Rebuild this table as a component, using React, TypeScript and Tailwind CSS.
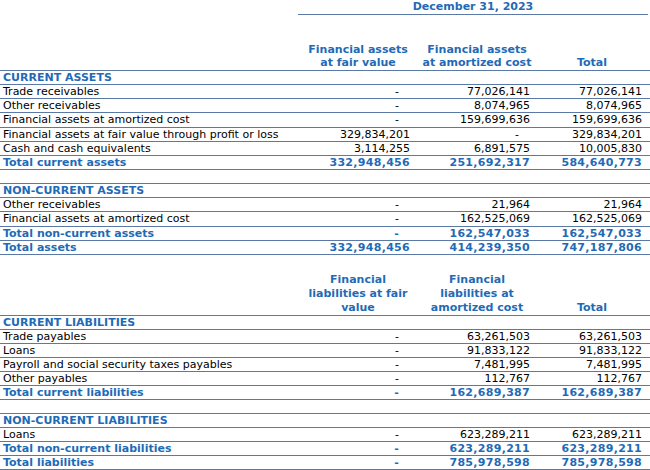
import React from "react";

type Kind = "head" | "item" | "total" | "blank";
type Row = { label?: string; v?: [string, string, string]; kind: Kind };

const assets: Row[] = [
  { label: "CURRENT ASSETS", kind: "head" },
  { label: "Trade receivables", v: ["-", "77,026,141", "77,026,141"], kind: "item" },
  { label: "Other receivables", v: ["-", "8,074,965", "8,074,965"], kind: "item" },
  { label: "Financial assets at amortized cost", v: ["-", "159,699,636", "159,699,636"], kind: "item" },
  { label: "Financial assets at fair value through profit or loss", v: ["329,834,201", "-", "329,834,201"], kind: "item" },
  { label: "Cash and cash equivalents", v: ["3,114,255", "6,891,575", "10,005,830"], kind: "item" },
  { label: "Total current assets", v: ["332,948,456", "251,692,317", "584,640,773"], kind: "total" },
  { kind: "blank" },
  { label: "NON-CURRENT ASSETS", kind: "head" },
  { label: "Other receivables", v: ["-", "21,964", "21,964"], kind: "item" },
  { label: "Financial assets at amortized cost", v: ["-", "162,525,069", "162,525,069"], kind: "item" },
  { label: "Total non-current assets", v: ["-", "162,547,033", "162,547,033"], kind: "total" },
  { label: "Total assets", v: ["332,948,456", "414,239,350", "747,187,806"], kind: "total" },
];

const liabilities: Row[] = [
  { label: "CURRENT LIABILITIES", kind: "head" },
  { label: "Trade payables", v: ["-", "63,261,503", "63,261,503"], kind: "item" },
  { label: "Loans", v: ["-", "91,833,122", "91,833,122"], kind: "item" },
  { label: "Payroll and social security taxes payables", v: ["-", "7,481,995", "7,481,995"], kind: "item" },
  { label: "Other payables", v: ["-", "112,767", "112,767"], kind: "item" },
  { label: "Total current liabilities", v: ["-", "162,689,387", "162,689,387"], kind: "total" },
  { kind: "blank" },
  { label: "NON-CURRENT LIABILITIES", kind: "head" },
  { label: "Loans", v: ["-", "623,289,211", "623,289,211"], kind: "item" },
  { label: "Total non-current liabilities", v: ["-", "623,289,211", "623,289,211"], kind: "total" },
  { label: "Total liabilities", v: ["-", "785,978,598", "785,978,598"], kind: "total" },
];

const GRID = "grid grid-cols-[298px_120px_118px_112px]";
const BORDER = "border-b border-[#5b79a6]";
const BLUE = "text-[#1f6bb6]";

function Num({ value, pr, bold }: { value: string; pr: string; bold: boolean }) {
  const isDash = value === "-";
  return (
    <div className={`text-right ${pr}`}>
      <span className={`${isDash ? "mr-[11px]" : ""} ${bold ? "tracking-[0.3px]" : ""}`}>{value}</span>
    </div>
  );
}

function TableRow({ row, h }: { row: Row; h: string }) {
  const bold = row.kind === "head" || row.kind === "total";
  const color = bold ? `${BLUE} font-bold` : "text-black";
  return (
    <div className={`${GRID} ${BORDER} ${h} items-center leading-[13px] ${color}`}>
      <div className="pl-[3px] whitespace-nowrap">{row.label ?? ""}</div>
      {row.v ? (
        <>
          <Num value={row.v[0]} pr="pr-[8px]" bold={bold} />
          <Num value={row.v[1]} pr="pr-[6px]" bold={bold} />
          <Num value={row.v[2]} pr="pr-[6px]" bold={bold} />
        </>
      ) : (
        <>
          <div />
          <div />
          <div />
        </>
      )}
    </div>
  );
}

export default function App() {
  return (
    <div className="w-[650px] h-[470px] bg-white overflow-hidden font-['DejaVu_Sans',sans-serif] text-[11px]">
      {/* Date header */}
      <div className="flex">
        <div className="w-[298px]" />
        <div className={`w-[350px] h-[15px] ${BORDER} ${BLUE} font-bold text-center leading-[14px]`}>
          December 31, 2023
        </div>
      </div>
      {/* Assets column headers */}
      <div className={`${GRID} ${BORDER} h-[56px] items-end ${BLUE} font-bold leading-[13px] text-center pb-[1px]`}>
        <div />
        <div>
          Financial assets
          <br />
          at fair value
        </div>
        <div>
          Financial assets
          <br />
          at amortized cost
        </div>
        <div>Total</div>
      </div>
      {assets.map((r, i) => (
        <TableRow key={`a${i}`} row={r} h="h-[14.15px]" />
      ))}
      {/* Liabilities column headers */}
      <div className={`${GRID} ${BORDER} h-[61px] items-end ${BLUE} font-bold leading-[14px] text-center`}>
        <div />
        <div>
          Financial
          <br />
          liabilities at fair
          <br />
          value
        </div>
        <div>
          Financial
          <br />
          liabilities at
          <br />
          amortized cost
        </div>
        <div>Total</div>
      </div>
      {liabilities.map((r, i) => (
        <TableRow key={`l${i}`} row={r} h="h-[14px]" />
      ))}
    </div>
  );
}
